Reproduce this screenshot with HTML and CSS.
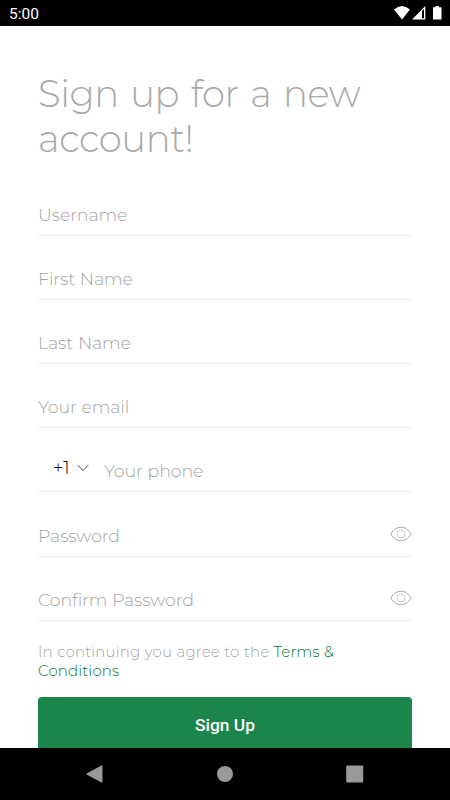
FILE: index.html
```html
<!DOCTYPE html>
<html lang="en">
<head>
    <meta charset="UTF-8">
    <meta name="viewport" content="width=device-width, initial-scale=1.0">
    <title>Sign Up</title>
    <link rel="stylesheet" href="styles.css">
</head>
<body>
<div class="screen">
    <div class="status-bar">
        <span>5:00</span>
        <svg width="50" height="16" viewBox="0 0 50 16" fill="#fff">
            <path d="M0 3.6Q8 -3.4 16 3.6L8 13.5Z"/>
            <path d="M18 13.5L31.3 0V13.5Z"/>
            <path fill="#000" d="M28 5L30 3V12.3H28Z"/>
            <path d="M41.5 0H45V1.3H47.5V13.5H39V1.3H41.5Z"/>
        </svg>
    </div>
    <form class="content">
        <h1>Sign up for a new account!</h1>
        <div class="field"><input type="text" placeholder="Username"></div>
        <div class="field"><input type="text" placeholder="First Name"></div>
        <div class="field"><input type="text" placeholder="Last Name"></div>
        <div class="field"><input type="email" placeholder="Your email"></div>
        <div class="field">
            <div class="country">
                <span>+1</span>
                <svg width="12" height="8" viewBox="0 0 12 8" fill="none" stroke="#333" stroke-width=".9"><path d="M.7 1L6 6.5L11.3 1"/></svg>
            </div>
            <input type="tel" placeholder="Your phone">
        </div>
        <div class="field">
            <input type="password" placeholder="Password">
            <svg class="eye" width="22" height="16" viewBox="0 0 22 16" fill="none" stroke="#aaa"><path d="M.6 8Q5 1.2 11 1.2T21.4 8Q17 14.8 11 14.8T.6 8Z"/><circle cx="11" cy="8" r="3.9" stroke="#ccc"/></svg>
        </div>
        <div class="field">
            <input type="password" placeholder="Confirm Password">
            <svg class="eye" width="22" height="16" viewBox="0 0 22 16" fill="none" stroke="#aaa"><path d="M.6 8Q5 1.2 11 1.2T21.4 8Q17 14.8 11 14.8T.6 8Z"/><circle cx="11" cy="8" r="3.9" stroke="#ccc"/></svg>
        </div>
        <p class="terms">In continuing you agree to the <a href="#">Terms &amp;<br>Conditions</a></p>
        <button class="btn-signup" type="button">Sign Up</button>
    </form>
    <div class="nav-bar">
        <svg width="18" height="18" viewBox="0 0 18 18" fill="#999"><path d="M.6 8.4L15.5 .4Q16.5 0 16.5 1V17Q16.5 18 15.5 17.5L.6 9.6Q-.2 9 .6 8.4Z"/></svg>
        <svg width="18" height="18" viewBox="0 0 18 18" fill="#999"><circle cx="9" cy="9" r="8"/></svg>
        <svg width="18" height="18" viewBox="0 0 18 18" fill="#999"><rect x=".2" y=".5" width="17" height="17" rx="1"/></svg>
    </div>
</div>
</body>
</html>
```
FILE: styles.css
```css
body{
    margin:0;
    background-color:#fff;
    font-family:Montserrat, Inter, sans-serif;
    font-weight:300;
}
.screen{
    display:flex;
    flex-direction:column;
    height:800px;
    overflow:hidden;
}
.status-bar{
    display:flex;
    flex:none;
    justify-content:space-between;
    height:26px;
    box-sizing:border-box;
    padding:6px 6px 0 9px;
    background-color:#000;
    color:#fff;
    font:400 15.5px/17px Roboto, sans-serif;
}
.content{
    flex:1;
    min-height:0;
    overflow:hidden;
    padding:45px 38px 0;
}
h1{
    margin:0 0 11px;
    color:#aaa;
    font-size:37px;
    line-height:45px;
    font-weight:300;
    letter-spacing:-.4px;
    word-spacing:2.4px;
}
.field{
    display:flex;
    align-items:flex-start;
    height:64.1px;
    box-sizing:border-box;
    padding-top:30.6px;
    border-bottom:1px solid #eee;
}
.field input{
    flex:1;
    min-width:0;
    height:24px;
    padding:0;
    border:0;
    outline:0;
    background:none;
    font:inherit;
    font-size:17.5px;
    letter-spacing:-.16px;
    word-spacing:.5px;
}
.field input::placeholder{
    color:#a4a4a4;
    opacity:1;
}
.country{
    display:flex;
    align-items:center;
    gap:7px;
    width:51px;
    height:18px;
    padding-left:15px;
    color:#000;
    font-size:18px;
    letter-spacing:.3px;
}
.eye{
    margin-top:3px;
}
.terms{
    margin:21px 0 17px;
    color:#a4a4a4;
    font-size:15px;
    line-height:19px;
    letter-spacing:.15px;
    word-spacing:.3px;
}
.terms a{
    color:#007a1c;
    text-decoration:none;
}
.btn-signup{
    display:block;
    width:374px;
    height:56px;
    padding:0;
    border:0;
    border-radius:4px;
    background-color:#1b854b;
    color:#fff;
    font:500 17.4px/56px Roboto, sans-serif;
}
.nav-bar{
    display:flex;
    flex:none;
    align-items:center;
    justify-content:space-between;
    height:52px;
    box-sizing:border-box;
    padding:0 86px;
    background-color:#000;
}
```
